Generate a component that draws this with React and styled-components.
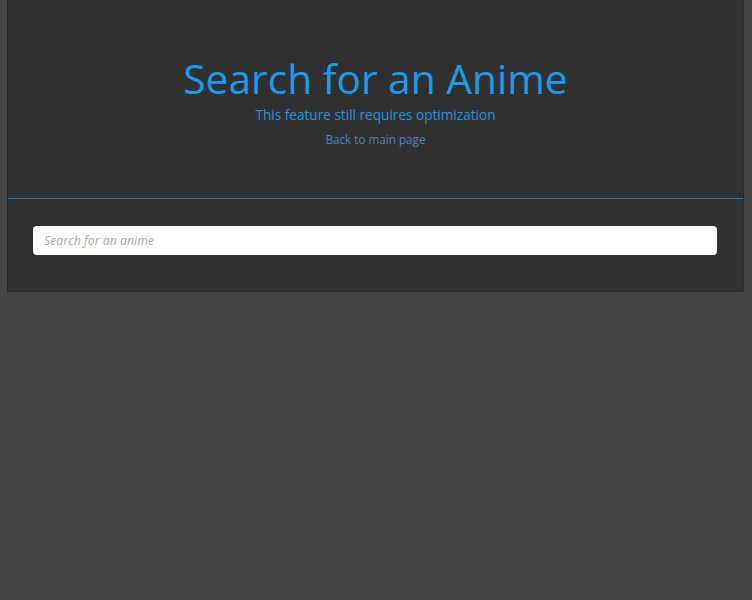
import React from "react";
import styled, { createGlobalStyle } from "styled-components";

const GlobalStyle = createGlobalStyle`
  html, body {
    margin: 0;
    padding: 0;
    background-color: #454545;
    font-family: "Open Sans", "Liberation Sans", sans-serif;
  }
`;

const Page = styled.div`
  padding: 0 8px 0 7px;
`;

const Panel = styled.div`
  background-color: #303030;
  border: 1px solid #2a2a2a;
  border-top: none;
`;

const Header = styled.header`
  height: 198px;
  display: flex;
  flex-direction: column;
  align-items: center;
  border-bottom: 1px solid #2477b8;
`;

const Title = styled.h1`
  margin: 52px 0 0;
  font-size: 40.7px;
  font-weight: 400;
  line-height: 52px;
  color: #1c9bea;
`;

const Subtitle = styled.p`
  margin: 1px 0 0;
  font-size: 13.6px;
  line-height: 20px;
  color: #2a90d8;
`;

const BackLink = styled.a`
  margin-top: 6px;
  font-size: 11.7px;
  line-height: 17px;
  color: #4a82c4;
  text-decoration: none;
`;

const SearchArea = styled.div`
  padding: 27px 26px 36px 25px;
`;

const SearchInput = styled.input`
  display: block;
  box-sizing: border-box;
  width: 100%;
  height: 29px;
  padding: 0 11px;
  border: none;
  border-radius: 4px;
  background-color: #ffffff;
  font-family: "Open Sans", "Liberation Sans", sans-serif;
  font-size: 12.3px;
  outline: none;

  &::placeholder {
    color: #a8a8a8;
    font-style: italic;
  }
`;

const App = () => (
  <>
    <GlobalStyle />
    <Page>
      <Panel>
        <Header>
          <Title>Search for an Anime</Title>
          <Subtitle>This feature still requires optimization</Subtitle>
          <BackLink href="#">Back to main page</BackLink>
        </Header>
        <SearchArea>
          <SearchInput type="text" placeholder="Search for an anime" />
        </SearchArea>
      </Panel>
    </Page>
  </>
);

export default App;
